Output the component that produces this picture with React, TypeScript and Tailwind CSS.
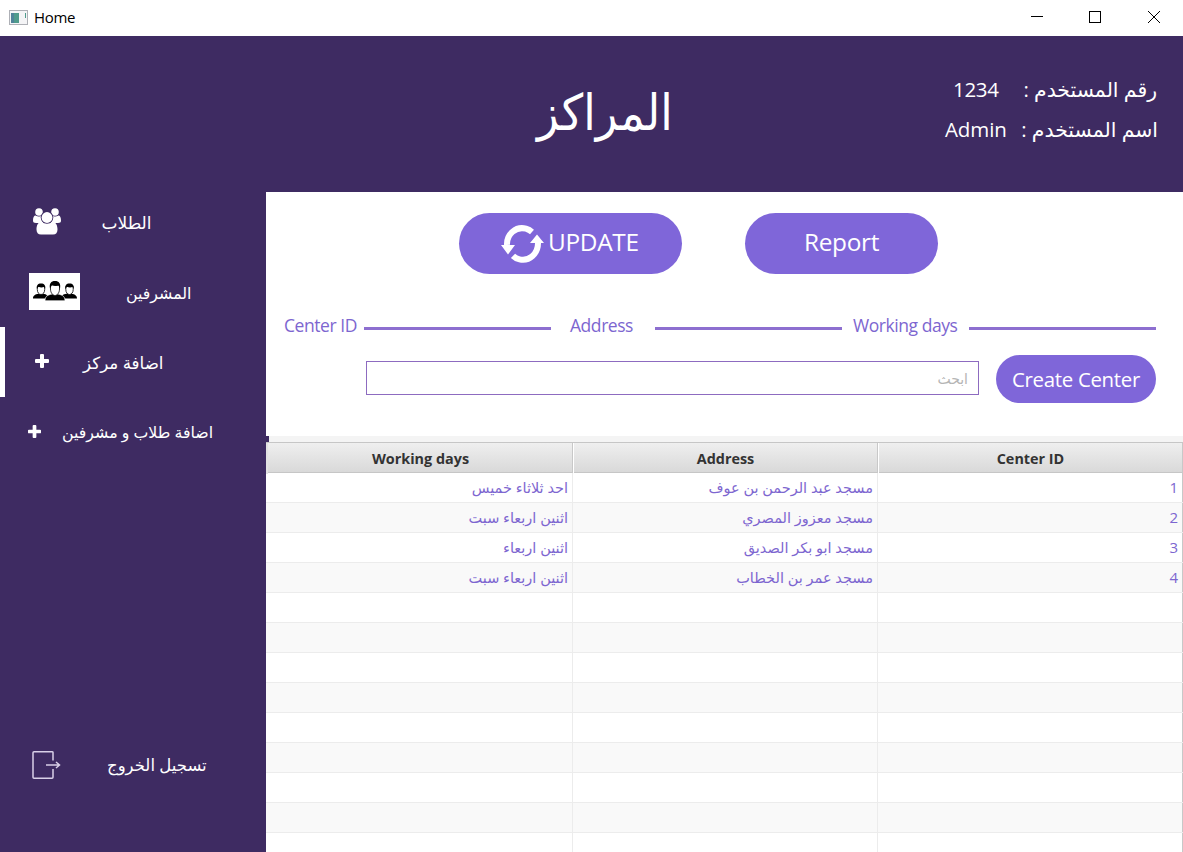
import type { ReactNode } from "react";

const rows = [
  { days: "احد ثلاثاء خميس", address: "مسجد عبد الرحمن بن عوف", id: "1" },
  { days: "اثنين اربعاء سبت", address: "مسجد معزوز المصري", id: "2" },
  { days: "اثنين اربعاء", address: "مسجد ابو بكر الصديق", id: "3" },
  { days: "اثنين اربعاء سبت", address: "مسجد عمر بن الخطاب", id: "4" },
  ...Array.from({ length: 9 }, () => ({ days: "", address: "", id: "" })),
];

function TitleBar() {
  return (
    <div className="flex h-9 shrink-0 items-center bg-white text-black">
      <svg className="-mt-[2px] ml-[9px] h-[15px] w-[19px]" viewBox="0 0 19 15">
        <rect x=".5" y=".5" width="18" height="14" fill="#f4f4f6" stroke="#aeb0b6" />
        <rect x="2" y="3" width="8" height="10" fill="#4f9b8c" />
        <path d="M2 3h3v10H2z" fill="#4f8399" />
        <path d="M16.500 3v5" stroke="#4f9b8c" />
      </svg>
      <span className="-mt-[2px] ml-[6px] text-[15px] tracking-[-0.3px]">Home</span>
      <svg className="ml-auto h-9 w-[153px]" viewBox="0 0 153 36" fill="none" stroke="#000">
        <path d="M1 16.500h12" />
        <rect x="59.500" y="11.500" width="11" height="11" />
        <path d="M118 11l12 12M130 11l-12 12" />
      </svg>
    </div>
  );
}

function Header() {
  return (
    <header className="flex h-[156px] shrink-0 text-white">
      <h1 className="ml-[536px] w-[144px] scale-x-[0.9] pt-[39px] text-center text-[50px] leading-[72px] whitespace-nowrap" dir="rtl">
        المراكز
      </h1>
      <div className="ml-auto flex flex-col pt-[33px] text-[20.400px] leading-10 whitespace-nowrap">
        <div className="flex h-10">
          <span className="w-[78px] text-[20.500px] tracking-[-0.3px]">1234</span>
          <span className="w-[152px] pr-[26px] text-right" dir="rtl">رقم المستخدم :</span>
        </div>
        <div className="flex h-10">
          <span className="-ml-2 w-[86px] text-[20.500px] tracking-[-0.1px]">Admin</span>
          <span className="w-[152px] pr-[25px] text-right" dir="rtl">اسم المستخدم :</span>
        </div>
      </div>
    </header>
  );
}

function StudentsIcon() {
  return (
    <svg className="-mt-px h-[27px] w-7" viewBox="0 0 28 27" fill="#fff">
      <circle cx="6" cy="4" r="3.800" />
      <circle cx="22" cy="4" r="3.800" />
      <path d="M0 12.500c0-3 .8-5 2.700-5 1.500 1 4.300 1.300 6.300.5C8.500 11 9 13 10.500 15H3C1 15 0 14.300 0 12.500zM28 12.500c0-3-.8-5-2.700-5-1.500 1-4.300 1.300-6.300.5.500 3 0 5-1.500 7H25c2 0 3-.7 3-2.500z" />
      <circle cx="14" cy="9.500" r="6.300" fill="#3e2b62" />
      <circle cx="14" cy="9.500" r="5.400" />
      <path d="M3.500 21.500c0-4 1.500-7.500 5-7.500 3.500 2.300 7.500 2.300 11 0 3.500 0 5 3.500 5 7.500 0 3-1.500 5-4.500 5H8c-3 0-4.500-2-4.500-5z" />
    </svg>
  );
}

function SupervisorsIcon() {
  return (
    <svg className="-mt-px h-[37px] w-[51px] bg-white" viewBox="0 0 51 37">
      <path d="M4 25.500c0-2.500 1.500-4 6-5h4c4 1 5 2.500 5 5zM32 25.500c0-2.500 1.500-4 6-5h4c4.500 1 6 2.500 6 5z" />
      <path d="M8.300 13.500v3c0 3 1.700 5 3.700 5s3.700-2 3.700-5v-3zM36.800 13.500v3c0 3 1.700 5 3.700 5s3.700-2 3.700-5v-3z" fill="#fff" stroke="#000" strokeWidth=".8" />
      <path d="M8 16c-.8-3.500.8-5.500 4-5.500s5 2 4 5.500l-1-2c-2 .8-4 .5-5.500-.3zM36.500 16c-.8-3.500.8-5.500 4-5.500s5 2 4 5.500l-1-2c-2 .8-4 .5-5.500-.3z" />
      <path d="M16 27.800c0-4 2-5.800 7-6.800h6c5 1 7 2.800 7 6.800z" stroke="#fff" strokeWidth=".7" />
      <path d="M21.500 12v4c0 4 2.500 6.500 4.500 6.500s4.500-2.500 4.500-6.500v-4z" fill="#fff" stroke="#000" strokeWidth=".8" />
      <path d="M21 15.500C20 10.500 22 8 26 8s6 2.500 5 7.500l-1.500-3c-2 .8-4.500.5-6.500-.5z" />
    </svg>
  );
}

function PlusIcon({ className }: { className: string }) {
  return (
    <svg className={className} viewBox="0 0 14 14" fill="#fff">
      <path d="M6 0h2q1 0 1 1v4h4q1 0 1 1v2q0 1-1 1H9v4q0 1-1 1H6q-1 0-1-1V9H1Q0 9 0 8V6q0-1 1-1h4V1q0-1 1-1z" />
    </svg>
  );
}

function SideItem({ icon, label, iconClass, labelClass, active }: {
  icon: ReactNode; label: string; iconClass: string; labelClass: string; active?: boolean;
}) {
  return (
    <div className={active ? "flex h-[70px] items-center border-l-[5px] border-white" : "flex h-[70px] items-center border-l-[5px] border-transparent"}>
      <span className={iconClass}>{icon}</span>
      <span className={labelClass} dir="rtl">{label}</span>
    </div>
  );
}

function Sidebar() {
  return (
    <nav className="flex w-[266px] shrink-0 flex-col whitespace-nowrap text-white">
      <div className="-mt-[5px]">
        <SideItem icon={<StudentsIcon />} label="الطلاب" iconClass="ml-[27.500px] w-[69px]" labelClass="pt-[2px] text-[17px]" />
        <SideItem icon={<SupervisorsIcon />} label="المشرفين" iconClass="ml-6 w-[97px]" labelClass="pt-[4px] text-[15.800px]" />
        <SideItem active icon={<PlusIcon className="-mt-[2px] size-[14px]" />} label="اضافة مركز" iconClass="ml-[30px] w-[48px]" labelClass="pt-[2px] text-[16.700px]" />
        <SideItem icon={<PlusIcon className="-mt-px size-[13px]" />} label="اضافة طلاب و مشرفين" iconClass="ml-[22.500px] w-[34.500px]" labelClass="pt-px text-[15.800px]" />
      </div>
      <div className="mt-[263px]">
        <SideItem
          icon={
            <svg className="h-[28px] w-[29px]" viewBox="0 0 29 28" fill="none" stroke="#d9d0e8" strokeWidth="1.500">
              <path d="M21 9.500V1.500Q21 .8 20 .8H2Q1 .8 1 1.800v24.400q0 1 1 1h18q1 0 1-1V18M14 14h13M24 11l3.500 3-3.500 3" />
            </svg>
          }
          label="تسجيل الخروج"
          iconClass="ml-[27px] w-[75px]"
          labelClass="text-[16.500px]"
        />
      </div>
    </nav>
  );
}

function Toolbar() {
  return (
    <section className="h-[244px] shrink-0">
      <div className="flex pt-[21px] pl-[193px] text-[24.400px] tracking-[-0.3px] text-white">
        <button className="flex h-[61px] w-[223px] items-center rounded-full bg-[#7f66d9] pl-[41px]">
          <svg className="h-[38px] w-[45px]" viewBox="0 0 45 38">
            <g fill="none" stroke="#fff" strokeWidth="6">
              <path d="M7 20C6.500 9 16 1 26 3.700c2.500.8 4.500 2 6 3.300" />
              <path d="M38 17c.5 12-9 19.500-18.500 17.300-3-.7-5-2-6.500-3.500" />
            </g>
            <path d="M1 20h14l-7 9.500zM30 18h14l-7-8.500z" fill="#fff" />
          </svg>
          <span className="-mt-[2px] ml-[3px]">UPDATE</span>
        </button>
        <button className="ml-[63px] h-[61px] w-[193px] rounded-full bg-[#7f66d9] pb-[2px]">Report</button>
      </div>
      <div className="mt-[36px] flex h-[30px] items-center text-[17.500px] tracking-[-0.450px] whitespace-nowrap text-[#7d66d0]">
        <span className="ml-[18px] w-[80px]">Center ID</span>
        <span className="mt-[6px] h-[3px] w-[187px] bg-[#8d6fd0]" />
        <span className="ml-[19px] w-[85px]">Address</span>
        <span className="mt-[6px] h-[3px] w-[187px] bg-[#8d6fd0]" />
        <span className="ml-[11px] w-[116px]">Working days</span>
        <span className="mt-[6px] h-[3px] w-[187px] bg-[#8d6fd0]" />
      </div>
      <div className="mt-[13px] flex h-[50px] items-center">
        <input
          dir="rtl"
          placeholder="ابحث"
          className="ml-[100px] h-[34px] w-[613px] border border-[#8d6bc0] bg-white px-[10px] text-[14px] outline-none placeholder:text-[#b5b5b5]"
        />
        <button className="mt-[2px] ml-[17px] h-[48px] w-[160px] rounded-full bg-[#7f66d9] text-[20.400px] tracking-[-0.3px] whitespace-nowrap text-white">
          Create Center
        </button>
      </div>
    </section>
  );
}

function CentersTable() {
  return (
    <section className="border-t-[6px] border-[#f4f4f4]">
      <div className="grid h-[31px] grid-cols-[307px_305px_305px] border-y border-[#c6c6c6] bg-linear-to-b from-[#efefef] to-[#d9d9d9] text-center text-[14.400px] leading-[31px] font-bold text-[#333]">
        <span className="border-r border-l-2 border-[#c8c8c8] border-l-[#e2e2e2] pl-px">Working days</span>
        <span className="border-r border-l border-[#c8c8c8] border-l-white">Address</span>
        <span className="border-r border-l border-[#c8c8c8] border-l-white">Center ID</span>
      </div>
      {rows.map((row, i) => (
        <div
          key={i}
          className="grid h-[30px] grid-cols-[307px_305px_305px] border-b border-[#ececec] bg-white text-right text-[14.500px] leading-[29px] whitespace-nowrap text-[#7d66d0] odd:bg-[#f9f9f9]"
        >
          <span className="border-r border-[#ececec] pr-[4px]">{row.days}</span>
          <span className="border-r border-[#ececec] pr-[4px]">{row.address}</span>
          <span className="border-r border-[#c8c8c8] pr-[4px] text-[15px]">{row.id}</span>
        </div>
      ))}
    </section>
  );
}

export default function App() {
  return (
    <div className="flex h-[852px] w-[1183px] flex-col overflow-hidden bg-[#3e2b62] font-['Open_Sans','DejaVu_Sans',sans-serif]">
      <TitleBar />
      <Header />
      <div className="flex min-h-0 flex-1">
        <Sidebar />
        <main className="flex w-[917px] flex-col overflow-hidden bg-white">
          <div className="relative flex flex-col">
            <Toolbar />
            <span className="absolute top-[244px] left-0 z-10 h-[6px] w-[3px] bg-[#3e2b62]" />
          </div>
          <CentersTable />
        </main>
      </div>
    </div>
  );
}
